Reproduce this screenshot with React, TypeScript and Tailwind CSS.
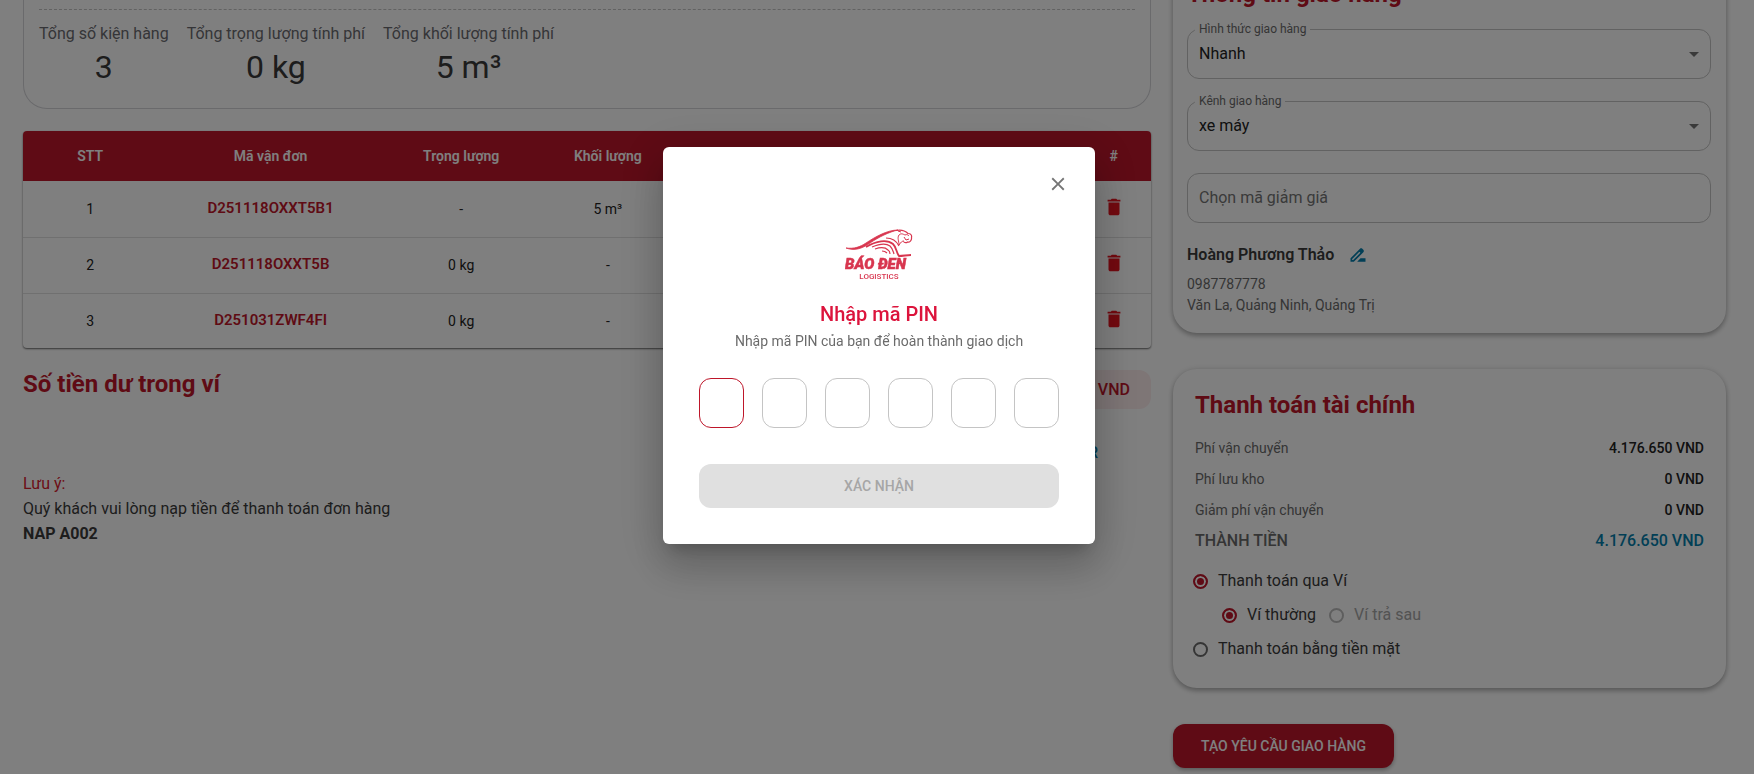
import { useState } from "react";
import { MdClose, MdDelete, MdDriveFileRenameOutline } from "react-icons/md";

const summary = [
  { label: "Tổng số kiện hàng", value: "3" },
  { label: "Tổng trọng lượng tính phí", value: "0 kg" },
  { label: "Tổng khối lượng tính phí", value: "5 m³" },
];

const packages = [
  { code: "D251118OXXT5B1", weight: "-", volume: "5 m³" },
  { code: "D251118OXXT5B", weight: "0 kg", volume: "-" },
  { code: "D251031ZWF4FI", weight: "0 kg", volume: "-" },
];

const fees = [
  { label: "Phí vận chuyển", value: "4.176.650 VND" },
  { label: "Phí lưu kho", value: "0 VND" },
  { label: "Giảm phí vận chuyển", value: "0 VND" },
];

const cardShadow = "shadow-[0_3px_5px_rgba(0,0,0,0.25),0_0_6px_rgba(0,0,0,0.12)]";

function Summary() {
  return (
    <section className="rounded-b-3xl border border-t-0 border-[#d4d4d8] px-[15px] pb-[21px] pt-[9px]">
      <div className="flex gap-[18px] border-t border-dashed border-[#c4c4c4] pt-[11px]">
        {summary.map((item) => (
          <div key={item.label} className="flex flex-col items-center">
            <span className="text-base leading-[26px] text-[#6b6b70]">{item.label}</span>
            <span className="text-[32px] leading-[40px] text-[#3a3a3a]">{item.value}</span>
          </div>
        ))}
      </div>
    </section>
  );
}

function PackageTable() {
  return (
    <div className="mt-[22px] overflow-hidden rounded shadow-[0_1px_2px_rgba(0,0,0,0.6)]">
      <table className="w-full table-fixed border-collapse text-center text-sm text-[#222]">
        <thead className="bg-[#be162a] text-white">
          <tr className="h-[50px]">
            <th className="w-[11.9%] font-semibold">STT</th>
            <th className="w-[20.1%] font-semibold">Mã vận đơn</th>
            <th className="w-[13.7%] font-semibold">Trọng lượng</th>
            <th className="w-[12.3%] font-semibold">Khối lượng</th>
            <th className="font-semibold">Trạng thái</th>
            <th className="w-[6.6%] font-semibold">#</th>
          </tr>
        </thead>
        <tbody>
          {packages.map((item, index) => (
            <tr key={item.code} className="h-14 border-b border-[#e0e0e0] last:h-[55px] last:border-0">
              <td>{index + 1}</td>
              <td>
                <a href="#" className="text-[15px] font-semibold text-[#be162a]">{item.code}</a>
              </td>
              <td>{item.weight}</td>
              <td>{item.volume}</td>
              <td></td>
              <td>
                <button type="button" aria-label="Xóa kiện hàng" className="pb-1 align-middle text-[#e5131f]">
                  <MdDelete size={22} />
                </button>
              </td>
            </tr>
          ))}
        </tbody>
      </table>
    </div>
  );
}

function Wallet() {
  return (
    <section>
      <div className="mt-[22px] flex items-start justify-between">
        <h2 className="text-2xl font-bold leading-7 text-[#be162a]">Số tiền dư trong ví</h2>
        <div className="rounded-xl bg-[#fdeced] px-[21px] text-base font-medium leading-[39px] text-[#be162a]">0 VND</div>
      </div>
      <div className="mt-8 flex justify-end pr-[53px]">
        <a href="#" className="text-base font-medium leading-6 text-[#047eac]">NẠP TIỀN QR</a>
      </div>
      <div className="mt-[6px] text-base leading-[25px] text-[#3a3a3a]">
        <p className="text-[#d9202e]">Lưu ý:</p>
        <p>Quý khách vui lòng nạp tiền để thanh toán đơn hàng</p>
        <p className="font-bold">NAP A002</p>
      </div>
    </section>
  );
}

function SelectField({ id, label, value }: { id: string; label: string; value: string }) {
  return (
    <div className="relative">
      <label htmlFor={id} className="absolute -top-2 left-2 bg-white px-1 text-xs leading-4 text-[#6b6b6b]">
        {label}
      </label>
      <select
        id={id}
        defaultValue={value}
        className="h-[50px] w-full appearance-none rounded-xl border border-[#c4c4c4] bg-white px-[11px] text-base text-[#222]"
      >
        <option>{value}</option>
      </select>
      <svg className="pointer-events-none absolute right-3 top-[23px] h-[5px] w-[10px]" viewBox="0 0 10 5">
        <path d="M0 0h10L5 5z" fill="#757575" />
      </svg>
    </div>
  );
}

function DeliveryInfo() {
  return (
    <section className={`rounded-b-3xl bg-white pb-[17px] pl-[14px] pr-[15px] ${cardShadow}`}>
      <h2 className="-mt-5 mb-[21px] text-2xl font-bold leading-7 text-[#be162a]">Thông tin giao hàng</h2>
      <div className="flex flex-col gap-[22px]">
        <SelectField id="method" label="Hình thức giao hàng" value="Nhanh" />
        <SelectField id="channel" label="Kênh giao hàng" value="xe máy" />
        <input
          aria-label="Chọn mã giảm giá"
          placeholder="Chọn mã giảm giá"
          className="h-[50px] w-full rounded-xl border border-[#c4c4c4] px-[11px] pb-[2px] text-base placeholder:text-[#757575]"
        />
      </div>
      <div className="mt-5 flex items-center gap-[14px]">
        <strong className="text-base font-semibold text-[#3a3a3a]">Hoàng Phương Thảo</strong>
        <button type="button" aria-label="Sửa địa chỉ" className="text-[#047eac]">
          <MdDriveFileRenameOutline size={20} />
        </button>
      </div>
      <div className="mt-[7px] text-sm leading-[21px] text-[#6b6b6b]">
        <p>0987787778</p>
        <p>Văn La, Quảng Ninh, Quảng Trị</p>
      </div>
    </section>
  );
}

const radioClass =
  "h-[15px] w-[15px] appearance-none rounded-full border-2 border-[#6b6b6b] checked:border-[#be162a] checked:bg-[#be162a] checked:shadow-[inset_0_0_0_2px_white] disabled:border-[#bdbdbd]";

function Payment() {
  const [method, setMethod] = useState("wallet");

  return (
    <section className={`mt-9 rounded-3xl bg-white px-[22px] pb-[22px] pt-5 ${cardShadow}`}>
      <h2 className="text-2xl font-bold leading-8 text-[#be162a]">Thanh toán tài chính</h2>
      <dl className="mt-3 text-sm leading-[31px]">
        {fees.map((fee) => (
          <div key={fee.label} className="flex justify-between">
            <dt className="text-[#6b6b6b]">{fee.label}</dt>
            <dd className="font-medium text-[#222]">{fee.value}</dd>
          </div>
        ))}
        <div className="flex justify-between text-base font-medium leading-[30px]">
          <dt className="text-[#6b6b6b]">THÀNH TIỀN</dt>
          <dd className="text-[#047eac]">4.176.650 VND</dd>
        </div>
      </dl>
      <div className="-ml-[2px] mt-2 text-base leading-[34px] text-[#3a3a3a]">
        <label className="flex items-center gap-[10px]">
          <input type="radio" name="method" className={radioClass} checked={method === "wallet"} onChange={() => setMethod("wallet")} />
          Thanh toán qua Ví
        </label>
        <div className="flex gap-[13px] pl-[29px]">
          <label className="flex items-center gap-[10px]">
            <input type="radio" name="wallet" className={radioClass} defaultChecked />
            Ví thường
          </label>
          <label className="flex items-center gap-[10px] text-[#a6a6a6]">
            <input type="radio" name="wallet" className={radioClass} disabled />
            Ví trả sau
          </label>
        </div>
        <label className="flex items-center gap-[10px]">
          <input type="radio" name="method" className={radioClass} checked={method === "cash"} onChange={() => setMethod("cash")} />
          Thanh toán bằng tiền mặt
        </label>
      </div>
    </section>
  );
}

function Logo() {
  return (
    <svg width="68" height="52" viewBox="0 0 68 52" fill="none" stroke="#d8364f" role="img" aria-label="Báo Đen Logistics">
      <path d="M1 19c8 1 14-1 20-5C30 8 42 1 53 1c-9 2-19 7-28 13C17 20 9 22 1 19z" fill="#d8364f" strokeWidth="0.800" />
      <path d="M51 1.500c5-1 9 0 12 3 3 0 4 2 3.500 4 .5 3-2 5-4 4.500-1 1-3 1-4-.5" strokeWidth="1.200" />
      <path d="M54 6c2-2 4-1 6 0M60 6c2-1 3 0 4 1M54 6c-2 3 0 6 0 10 2-3 3-4 5-4M59 8l2 3 3-1M56 3l-3-1" strokeWidth="1" />
      <path d="M21 18c10-6 21-8 27-3 4 4 3 8 6 12 4 0 8-1 12-1" strokeWidth="1.800" />
      <path d="M41 9c7 0 11 4 13 8M27 18c7-3 14-4 18-1 3 3 3 5 4 8M30 20c6-2 11-1 13 1 2 1 2 3 2 4M37 22c3 0 4 1 5 2" strokeWidth="1.200" />
      <text x="0" y="40" textAnchor="start" fontSize="15" fontWeight="900" fontStyle="italic" fill="#d8364f" stroke="#d8364f" strokeWidth="0.500">BÁO ĐEN</text>
      <text x="34" y="50" textAnchor="middle" fontSize="8" fontWeight="500" fill="#d8364f" stroke="none">LOGISTICS</text>
    </svg>
  );
}

function PinDialog() {
  return (
    <div className="fixed inset-0 flex items-start justify-center bg-black/50 pl-1 pt-[147px]">
      <div
        role="dialog"
        aria-modal="true"
        aria-labelledby="pin-title"
        className="flex w-[432px] flex-col rounded-md bg-white px-9 pb-9 pt-[26px] shadow-[0_11px_15px_-7px_rgba(0,0,0,0.2),0_24px_38px_3px_rgba(0,0,0,0.14),0_9px_46px_8px_rgba(0,0,0,0.12)]"
      >
        <button type="button" aria-label="Đóng" className="-mr-[10px] self-end text-[#757575]">
          <MdClose size={22} />
        </button>
        <div className="mt-[34px] flex flex-col items-center">
          <Logo />
          <h1 id="pin-title" className="mt-[19px] text-xl font-medium leading-7 text-[#dc143c]">Nhập mã PIN</h1>
          <p className="text-sm leading-[26px] text-[#6b6b6b]">Nhập mã PIN của bạn để hoàn thành giao dịch</p>
        </div>
        <div className="mt-6 flex justify-between">
          {[1, 2, 3, 4, 5, 6].map((n) => (
            <input
              key={n}
              type="password"
              maxLength={1}
              aria-label={`Số thứ ${n}`}
              className="h-[50px] w-[45px] rounded-xl border border-[#c4c4c4] text-center outline-none first:border-[#be162a]"
            />
          ))}
        </div>
        <button type="button" disabled className="mt-9 h-11 rounded-xl bg-[#e0e0e0] text-sm font-medium text-[#a6a6a6]">
          XÁC NHẬN
        </button>
      </div>
    </div>
  );
}

export default function App() {
  return (
    <div className="min-h-screen overflow-hidden bg-white font-['Roboto','Noto_Sans',sans-serif]">
      <main className="grid grid-cols-[1128fr_553fr] items-start gap-[22px] pl-[23px] pr-7">
        <div>
          <Summary />
          <PackageTable />
          <Wallet />
        </div>
        <div>
          <DeliveryInfo />
          <Payment />
          <button type="button" className="mt-9 h-11 rounded-xl bg-[#be162a] px-7 text-sm font-medium text-white shadow-[0_2px_4px_rgba(0,0,0,0.3)]">
            TẠO YÊU CẦU GIAO HÀNG
          </button>
        </div>
      </main>
      <PinDialog />
    </div>
  );
}
